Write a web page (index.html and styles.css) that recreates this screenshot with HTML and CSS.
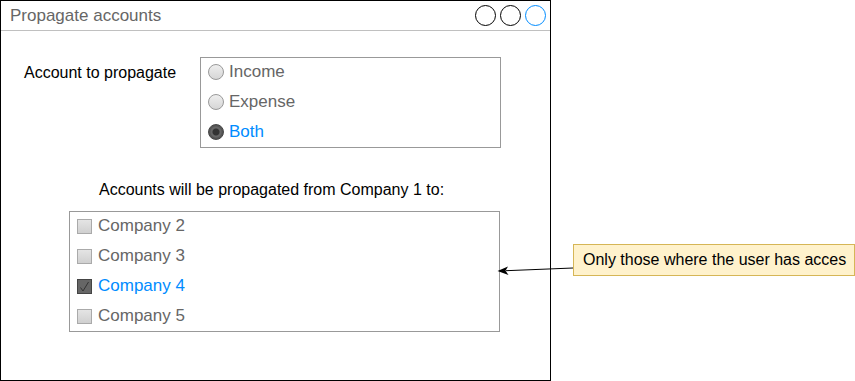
FILE: index.html
```html
<!DOCTYPE html>
<html lang="en">
<head>
    <meta charset="UTF-8">
    <meta name="viewport" content="width=device-width, initial-scale=1.0">
    <title>Propagate accounts</title>
    <link rel="stylesheet" href="styles.css">
</head>
<body>
    <div class="canvas">
        <div class="window">
            <div class="titlebar">
                <span class="title">Propagate accounts</span>
                <div class="buttons">
                    <span class="btn"></span>
                    <span class="btn"></span>
                    <span class="btn blue"></span>
                </div>
            </div>
            <div class="content">
                <div class="row">
                    <div class="label">Account to propagate</div>
                    <div class="group radios">
                        <div class="item"><span class="radio"></span>Income</div>
                        <div class="item"><span class="radio"></span>Expense</div>
                        <div class="item selected"><span class="radio on"></span>Both</div>
                    </div>
                </div>
                <div class="note">Accounts will be propagated from Company 1 to:</div>
                <div class="group checks">
                    <div class="item"><span class="check"></span>Company 2</div>
                    <div class="item"><span class="check"></span>Company 3</div>
                    <div class="item selected">
                        <span class="check on">
                            <svg width="13" height="13" viewBox="0 0 13 13"><polyline points="2.5,7.5 5,11 10.5,2" fill="none" stroke="#333" stroke-width="1"/></svg>
                        </span>Company 4
                    </div>
                    <div class="item"><span class="check"></span>Company 5</div>
                </div>
            </div>
        </div>

        <div class="callout">Only those where the user has acces</div>

        <svg class="arrow" width="855" height="381">
            <line x1="573" y1="268" x2="506" y2="270.7" stroke="#000" stroke-width="1"/>
            <path d="M497.5,271 L508,266.5 L505.5,270.8 L508.5,275 Z" fill="#000"/>
        </svg>
    </div>
</body>
</html>
```

FILE: styles.css
```css
body {
    margin: 0;
    padding: 0;
    background: #fff;
    font-family: "Liberation Sans", Arial, sans-serif;
}

.canvas {
    position: relative;
    width: 855px;
    height: 381px;
}

.window {
    box-sizing: border-box;
    width: 551px;
    height: 381px;
    border: 1px solid #000;
    display: flex;
    flex-direction: column;
}

.titlebar {
    display: flex;
    align-items: center;
    justify-content: space-between;
    height: 29px;
    border-bottom: 1px solid #c0c0c0;
    padding: 0 4px 0 9px;
}

.title {
    font-size: 17px;
    color: #666;
}

.buttons {
    display: flex;
    gap: 4px;
}

.btn {
    box-sizing: border-box;
    width: 21px;
    height: 21px;
    border: 1px solid #000;
    border-radius: 50%;
}

.btn.blue { border-color: #008cff; }

.content {
    display: flex;
    flex-direction: column;
    align-items: flex-start;
    padding-top: 26px;
}

.row {
    display: flex;
    align-items: flex-start;
}

.label {
    width: 176px;
    padding-left: 23px;
    padding-top: 1px;
    line-height: 30px;
    font-size: 16px;
    color: #000;
}

.group {
    box-sizing: border-box;
    border: 1px solid #999;
}

.radios {
    width: 301px;
    height: 91px;
}

.checks {
    width: 431px;
    height: 121px;
    margin-left: 68px;
    margin-top: 6px;
}

.item {
    display: flex;
    align-items: center;
    height: 30px;
    padding-left: 7px;
    font-size: 17px;
    color: #666;
}

.item:first-child { margin-top: -1px; }

.item.selected { color: #008cff; }

.radio {
    box-sizing: border-box;
    width: 16px;
    height: 16px;
    margin-right: 5px;
    border: 1px solid #999;
    border-radius: 50%;
    background: linear-gradient(#eee, #d6d6d6);
}

.radio.on {
    border-color: #444;
    background: radial-gradient(circle, #333 0 3px, #666 4px 5px, #555 6px);
}

.check {
    box-sizing: border-box;
    display: flex;
    align-items: center;
    justify-content: center;
    width: 15px;
    height: 15px;
    margin-right: 6px;
    border: 1px solid #aaa;
    background: linear-gradient(#e4e4e4, #d0d0d0);
}

.check.on {
    border-color: #444;
    background: #666;
}

.note {
    margin-top: 27px;
    margin-left: 98px;
    line-height: 30px;
    font-size: 16px;
    color: #000;
}

.callout {
    position: absolute;
    left: 573px;
    top: 244px;
    box-sizing: border-box;
    width: 282px;
    height: 32px;
    padding-left: 9px;
    line-height: 30px;
    font-size: 16px;
    color: #000;
    background: #fff2cc;
    border: 1px solid #d6b656;
}

.arrow {
    position: absolute;
    left: 0;
    top: 0;
    pointer-events: none;
}
```
